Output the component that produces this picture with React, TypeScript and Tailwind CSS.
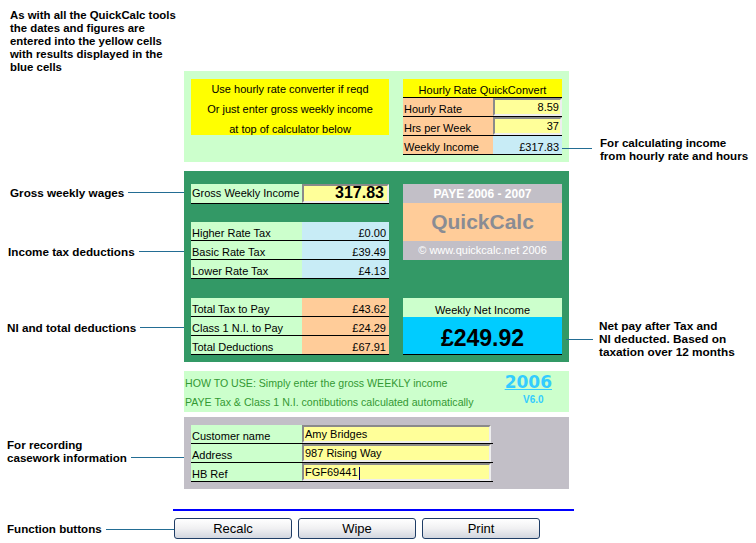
import type { ReactNode } from "react";

const SANS = "font-['Liberation_Sans',Arial,sans-serif]";

function Line({ className = "" }: { className?: string }) {
  return <div className={`h-px bg-[#236d94] ${className}`} />;
}

function LeftNote({ children, className = "" }: { children: ReactNode; className?: string }) {
  return (
    <div className={`flex items-center font-bold text-[11.7px] leading-[13px] ${className}`}>
      <span className="whitespace-nowrap">{children}</span>
      <Line className="ml-[4px] flex-1" />
    </div>
  );
}

function Bevel({ children, className = "" }: { children: ReactNode; className?: string }) {
  return (
    <div
      className={`flex h-full items-end border-2 border-t-[#8a8a8a] border-l-[#8a8a8a] border-r-[#eeeeee] border-b-[#eeeeee] bg-[#ffff99] ${className}`}
    >
      {children}
    </div>
  );
}

type RowProps = {
  label: string;
  value: ReactNode;
  valueClass: string;
  input?: boolean;
  labelClass?: string;
  labelWidth?: string;
};

function Row({ label, value, valueClass, input, labelClass = "bg-[#ccffcc]", labelWidth = "w-[111px]" }: RowProps) {
  return (
    <div className="flex h-[19px] border-b border-black leading-[13px]">
      <div className={`${labelWidth} ${labelClass} flex items-end pl-[1px]`}>{label}</div>
      <div className={`flex-1 ${valueClass}`}>
        {input ? (
          <Bevel className="justify-end pr-[1px]">{value}</Bevel>
        ) : (
          <div className="flex h-full items-end justify-end pr-[3px]">{value}</div>
        )}
      </div>
    </div>
  );
}

function InfoRow({ label, value }: { label: string; value: ReactNode }) {
  return (
    <div className="flex h-[19px] border-b border-black leading-[13px]">
      <div className="flex w-[111px] items-end bg-[#ccffcc] pl-[1px]">{label}</div>
      <div className="w-[189px]">
        <Bevel className="pl-[1px]">{value}</Bevel>
      </div>
    </div>
  );
}

function Button({ label }: { label: string }) {
  return (
    <button
      type="button"
      className="h-[21px] w-[118px] rounded-[3px] border border-[#1f3d66] bg-linear-to-b from-white via-[#f0f0f2] to-[#d2d6df] text-[13px] leading-[19px] text-black"
    >
      {label}
    </button>
  );
}

export default function App() {
  const blue = "bg-[#c8ecf6]";
  const orange = "bg-[#ffcc99]";

  return (
    <div className={`h-[543px] w-[756px] overflow-hidden bg-white text-[11px] text-black ${SANS}`}>
      <div className="h-[71px] pl-[10px] pt-[9px] text-[11.4px] font-bold leading-[13px]">
        As with all the QuickCalc tools
        <br />
        the dates and figures are
        <br />
        entered into the yellow cells
        <br />
        with results displayed in the
        <br />
        blue cells
      </div>

      {/* converter */}
      <div className="grid h-[91px] grid-cols-[184px_385px_1fr]">
        <div />
        <div className="flex gap-[14px] bg-[#ccffcc] pl-[7px] pt-[8px]">
          <div className="h-[56px] w-[198px] bg-[#ffff00] text-center leading-[20px]">
            Use hourly rate converter if reqd
            <br />
            Or just enter gross weekly income
            <br />
            at top of calculator below
          </div>
          <div className="w-[159px]">
            <div className="flex h-[19px] items-end justify-center border-b border-black bg-[#ffff00] leading-[13px]">
              Hourly Rate QuickConvert
            </div>
            <Row label="Hourly Rate" value="8.59" valueClass="bg-[#ffff99]" input labelClass={orange} labelWidth="w-[90px]" />
            <Row label="Hrs per Week" value="37" valueClass="bg-[#ffff99]" input labelClass={orange} labelWidth="w-[90px]" />
            <Row label="Weekly Income" value="£317.83" valueClass={blue} labelClass={orange} labelWidth="w-[90px]" />
          </div>
        </div>
        <div className="mt-[64px] flex items-center">
          <Line className="-ml-[7px] w-[30px]" />
          <div className="ml-[8px] whitespace-nowrap text-[11.6px] font-bold leading-[13px]">
            For calculating income
            <br />
            from hourly rate and hours
          </div>
        </div>
      </div>

      {/* calculator */}
      <div className="mt-[9px] grid h-[191px] grid-cols-[184px_385px_1fr]">
        <div className="flex flex-col">
          <LeftNote className="mt-[15px] pl-[10px]">Gross weekly wages</LeftNote>
          <LeftNote className="mt-[46px] pl-[8px]">Income tax deductions</LeftNote>
          <LeftNote className="mt-[63px] pl-[7px]">NI and total deductions</LeftNote>
        </div>
        <div className="flex gap-[14px] bg-[#339966] pl-[7px] pt-[13px]">
          <div className="w-[198px]">
            <div className="flex h-[20px] border-b border-black">
              <div className="flex w-[111px] items-center bg-[#ccffcc] pl-[1px]">Gross Weekly Income</div>
              <div className="flex-1">
                <Bevel className="items-center justify-end pr-[3px] text-[16px] font-bold leading-[16px]">317.83</Bevel>
              </div>
            </div>
            <div className="mt-[18px]">
              <Row label="Higher Rate Tax" value="£0.00" valueClass={blue} />
              <Row label="Basic Rate Tax" value="£39.49" valueClass={blue} />
              <Row label="Lower Rate Tax" value="£4.13" valueClass={blue} />
            </div>
            <div className="mt-[19px]">
              <Row label="Total Tax to Pay" value="£43.62" valueClass={orange} />
              <Row label="Class 1 N.I. to Pay" value="£24.29" valueClass={orange} />
              <Row label="Total Deductions" value="£67.91" valueClass={orange} />
            </div>
          </div>
          <div className="w-[159px]">
            <div className="flex h-[19px] items-center justify-center bg-[#c2bfc7] text-[12px] font-bold text-white">
              PAYE 2006 - 2007
            </div>
            <div className="flex h-[38px] items-center justify-center bg-[#ffcc99] text-[21px] font-bold text-[#8a8c94]">
              QuickCalc
            </div>
            <div className="flex h-[19px] items-center justify-center bg-[#c2bfc7] text-white">
              © www.quickcalc.net 2006
            </div>
            <div className="mt-[38px] flex h-[19px] items-end justify-center bg-[#ccffcc] leading-[13px]">
              Weekly Net Income
            </div>
            <div className="flex h-[38px] items-center justify-center border-b border-black bg-[#00ccff] pt-[6px] text-[23px] font-bold">
              £249.92
            </div>
          </div>
        </div>
        <div className="mt-[145px] flex items-center">
          <Line className="-ml-[3px] w-[27px]" />
          <div className="ml-[6px] whitespace-nowrap text-[11.8px] font-bold leading-[13px]">
            Net pay after Tax and
            <br />
            NI deducted. Based on
            <br />
            taxation over 12 months
          </div>
        </div>
      </div>

      {/* how to use */}
      <div className="mt-[9px] grid h-[39px] grid-cols-[184px_385px_1fr]">
        <div />
        <div className="flex bg-[#ccffcc]">
          <div className="pl-[1px] pt-[3px] text-[10.6px] leading-[19px] text-[#339933]">
            HOW TO USE: Simply enter the gross WEEKLY income
            <br />
            PAYE Tax &amp; Class 1 N.I. contibutions calculated automatically
          </div>
          <div className="ml-auto mr-[17px] flex flex-col items-center pt-[2px] text-[#33ccff]">
            <span className="font-['DejaVu_Sans',Verdana,sans-serif] text-[17px] font-bold leading-[19px] underline">2006</span>
            <span className="ml-[10px] mt-[2px] text-[10px] font-bold leading-[11px]">V6.0</span>
          </div>
        </div>
      </div>

      {/* casework */}
      <div className="mt-[7px] grid h-[72px] grid-cols-[184px_385px_1fr]">
        <div className="pl-[7px] pt-[21px] text-[11.6px] font-bold leading-[13px]">
          <div>For recording</div>
          <div className="flex items-center">
            <span className="whitespace-nowrap">casework information</span>
            <Line className="ml-[4px] flex-1" />
          </div>
        </div>
        <div className="bg-[#c2bfc7] pl-[7px] pt-[8px]">
          <div className="w-[302px]">
            <InfoRow label="Customer name" value="Amy Bridges" />
            <InfoRow label="Address" value="987 Rising Way" />
            <InfoRow
              label="HB Ref"
              value={
                <span className="flex items-end">
                  FGF69441
                  <span className="mb-[-1px] ml-[1px] h-[13px] w-px bg-[#000066]" />
                </span>
              }
            />
          </div>
        </div>
      </div>

      <div className="ml-[173px] mt-[20px] h-[2px] w-[401px] bg-[#0000ff]" />

      <div className="mt-[7px] flex h-[21px] items-center">
        <div className="flex w-[174px] items-center pl-[7px] text-[11.6px] font-bold">
          <span className="whitespace-nowrap">Function buttons</span>
          <Line className="ml-[4px] mt-[3px] flex-1" />
        </div>
        <div className="flex gap-[6px]">
          <Button label="Recalc" />
          <Button label="Wipe" />
          <Button label="Print" />
        </div>
      </div>
    </div>
  );
}
